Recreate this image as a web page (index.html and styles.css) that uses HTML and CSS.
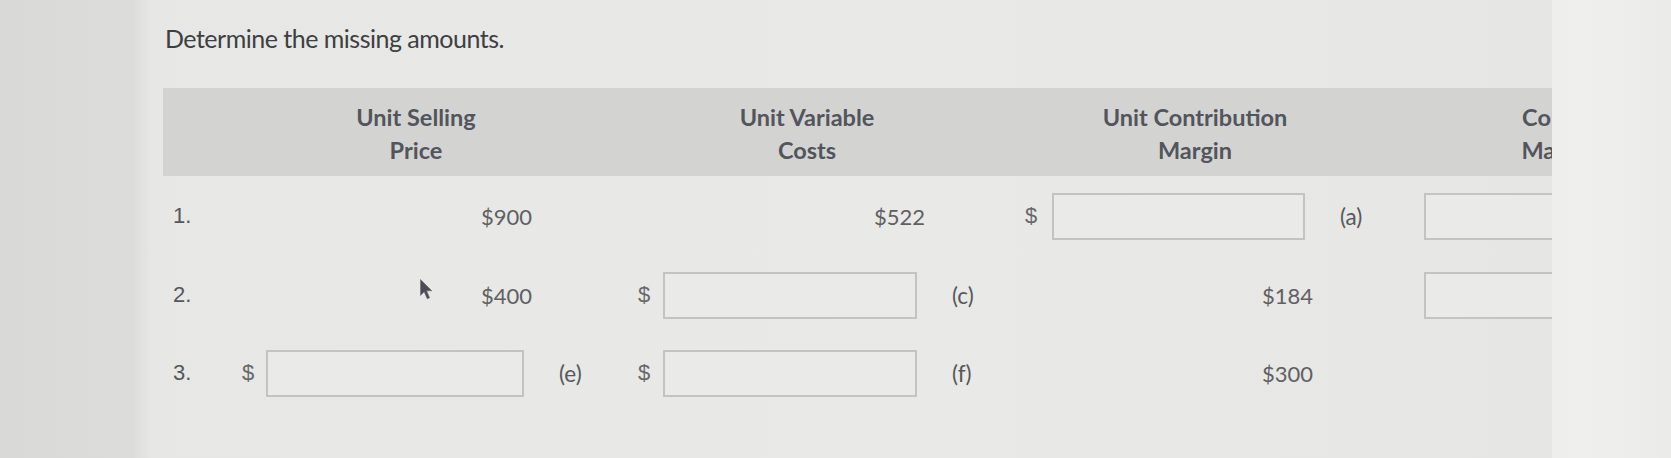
FILE: index.html
```html
<!DOCTYPE html>
<html lang="en">
<head>
<meta charset="utf-8">
<title>Determine the missing amounts</title>
<link rel="stylesheet" href="styles.css">
</head>
<body>
  <div class="screen">
    <div class="content">
      <p class="title">Determine the missing amounts.</p>
      <div class="table">
        <div class="th th-blank"></div>
        <div class="th th-a">Unit Selling<br>Price</div>
        <div class="th th-b">Unit Variable<br>Costs</div>
        <div class="th th-c">Unit Contribution<br>Margin</div>
        <div class="th th-d">Contribution<br>Margin Ratio</div>

        <div class="num">1.</div>
        <div class="val span2">$900</div>
        <div class="blank"></div>
        <div class="val span2">$522</div>
        <div class="blank"></div>
        <div class="dollar">$</div>
        <div class="field"><input class="box" type="text" aria-label="Unit contribution margin 1"></div>
        <div class="lab">(a)</div>
        <div class="field"><input class="box box-d" type="text" aria-label="Contribution margin ratio 1"></div>

        <div class="num">2.</div>
        <div class="val span2">$400</div>
        <div class="blank"></div>
        <div class="dollar">$</div>
        <div class="field"><input class="box" type="text" aria-label="Unit variable costs 2"></div>
        <div class="lab">(c)</div>
        <div class="val span2">$184</div>
        <div class="blank"></div>
        <div class="field"><input class="box box-d" type="text" aria-label="Contribution margin ratio 2"></div>

        <div class="num">3.</div>
        <div class="dollar">$</div>
        <div class="field"><input class="box" type="text" aria-label="Unit selling price 3"></div>
        <div class="lab">(e)</div>
        <div class="dollar">$</div>
        <div class="field"><input class="box" type="text" aria-label="Unit variable costs 3"></div>
        <div class="lab">(f)</div>
        <div class="val span2">$300</div>
        <div class="blank"></div>
        <div class="blank"></div>
      </div>
    </div>
  </div>
  <div class="bezel"></div>
  <svg class="cursor" width="16" height="24" viewBox="0 0 16 24" aria-hidden="true">
    <path d="M1.5 1.5 L1.5 17.5 L5.2 13.8 L8.2 20.8 L10.6 19.8 L7.6 12.8 L12.8 12.8 Z" fill="#4b4d52" stroke="#6a6c70" stroke-width="0.6"/>
  </svg>
</body>
</html>
```

FILE: styles.css
```css
html, body {
  margin: 0;
  padding: 0;
}

body {
  position: relative;
  display: flex;
  width: 1671px;
  height: 458px;
  overflow: hidden;
  background: #e8e8e6;
  font-family: Lato, "Open Sans", sans-serif;
}

.screen {
  flex: none;
  width: 1552px;
  height: 458px;
  overflow: hidden;
  background: linear-gradient(to right, #d9d9d7 0, #dcdcda 132px, #e7e7e5 152px, #e9e9e7 60%, #e6e6e4 100%);
}

.content {
  padding: 23px 0 0 163px;
}

.title {
  margin: 0 0 35px 2px;
  font-size: 25px;
  letter-spacing: -0.5px;
  line-height: 30px;
  color: #3d3f42;
}

.table {
  display: grid;
  grid-template-columns: 77px 26px 258px 112px 27px 254px 106px 29px 253px 119px 330px;
  grid-template-rows: 88px 80px 78px 78px;
  align-items: center;
  width: max-content;
}

.th {
  align-self: stretch;
  display: flex;
  align-items: center;
  justify-content: center;
  background: #d3d3d2;
  font-size: 23.5px;
  font-weight: 700;
  line-height: 33px;
  color: #52555c;
  text-align: center;
  padding-top: 3px;
}

.th-a { grid-column: span 3; padding-right: 44px; }
.th-b { grid-column: span 3; padding-right: 45px; }
.th-c { grid-column: span 3; padding-right: 57px; }

.num {
  padding-left: 10px;
  font-family: "Liberation Sans", Arial, sans-serif;
  font-size: 22px;
  color: #56575a;
}

.span2 {
  grid-column: span 2;
}

.val {
  margin-right: -8px;
  text-align: right;
  font-size: 22px;
  color: #5e6064;
}

.dollar {
  padding-left: 2px;
  font-family: "Liberation Sans", Arial, sans-serif;
  font-size: 22px;
  color: #66686b;
}

.lab {
  padding-left: 35px;
  font-size: 22.5px;
  color: #55575b;
}

.field {
  display: flex;
}

.box {
  box-sizing: border-box;
  width: 100%;
  height: 47px;
  margin: 0;
  padding: 0;
  border: 2px solid #c3c3c1;
  border-radius: 0;
  background: #eaeae8;
  outline: none;
}

.box-d {
  width: 253px;
}

.bezel {
  flex: 1;
  height: 458px;
  background: linear-gradient(to right, #eeeeec 0, #efefed 30px, #ebebe9 100%);
}

.cursor {
  position: absolute;
  left: 419px;
  top: 278px;
}
```
